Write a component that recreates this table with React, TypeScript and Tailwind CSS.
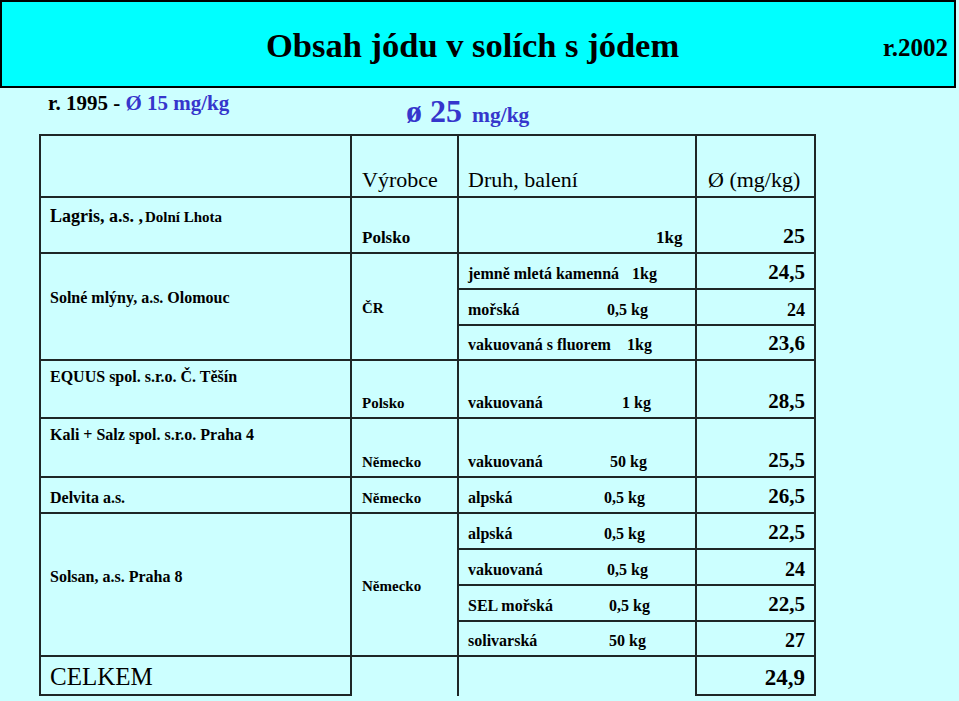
import type { ReactNode } from "react";

// light cyan slide, table of iodine content
const LINE = "border-[#1e2626]";

function Cell({ className = "", children }: { className?: string; children?: ReactNode }) {
  return <div className={`flex border-r-2 border-b-2 ${LINE} ${className}`}>{children}</div>;
}

function Druh({ name, amt, w }: { name: string; amt: string; w: string }) {
  return (
    <Cell className="items-end pl-[9px] pb-[6px] text-[16px] font-bold leading-none">
      <span className={`shrink-0 ${w}`}>{name}</span>
      <span>{amt}</span>
    </Cell>
  );
}

function Val({ v, size }: { v: string; size: string }) {
  return <Cell className={`items-end justify-end pr-[9px] pb-[5px] font-bold leading-none ${size}`}>{v}</Cell>;
}

export default function App() {
  return (
    <div className="min-h-screen w-full bg-[#ccffff] font-['Liberation_Serif','Times_New_Roman',serif] text-black">
      <div className="flex h-[88px] w-[956px] items-center border-2 border-black bg-[#00ffff]">
        <h1 className="ml-[264px] mt-[2px] text-[34.5px] font-bold leading-none">Obsah jódu v solích s jódem</h1>
        <span className="ml-auto mr-[6px] mt-[6px] text-[25px] font-bold leading-none">r.2002</span>
      </div>

      <div className="flex h-[46px]">
        <div className="w-[406px] pl-[48px] pt-[5px] text-[21px] font-bold leading-none">
          r. 1995 - <span className="text-[#3636cc]">Ø 15 mg/kg</span>
        </div>
        <div className="flex items-baseline pt-[7px] font-bold leading-none text-[#3636cc]">
          <span className="text-[32px]">ø 25</span>
          <span className="ml-[10px] text-[21.5px]">mg/kg</span>
        </div>
      </div>

      <div className="pl-[39px]">
        <div
          className={`grid grid-cols-[311px_107px_238px_119px] grid-rows-[62px_56px_36px_36px_35px_58px_59px_36px_36px_36px_36px_35px_39px] border-l-2 border-t-2 ${LINE} w-max`}
        >
          {/* header */}
          <Cell />
          <Cell className="items-end pl-[10px] pb-[5px] text-[22px] leading-none">Výrobce</Cell>
          <Cell className="items-end pl-[9px] pb-[5px] text-[22px] leading-none">Druh, balení</Cell>
          <Cell className="items-end pl-[11px] pb-[5px] text-[22px] leading-none">Ø (mg/kg)</Cell>

          {/* Lagris */}
          <Cell className="items-start pl-[9px] pt-[9px] font-bold leading-none">
            <span className="flex items-baseline">
              <span className="text-[18px]">Lagris, a.s. ,</span>
              <span className="ml-[2px] text-[15px]">Dolní Lhota</span>
            </span>
          </Cell>
          <Cell className="items-end pl-[10px] pb-[6px] text-[17px] font-bold leading-none">Polsko</Cell>
          <Cell className="items-end pl-[197px] pb-[6px] text-[17px] font-bold leading-none">1kg</Cell>
          <Val v="25" size="text-[22px]" />

          {/* Solné mlýny */}
          <Cell className="row-span-3 items-center pl-[9px] pb-[18px] text-[16px] font-bold leading-none">
            Solné mlýny, a.s. Olomouc
          </Cell>
          <Cell className="row-span-3 items-center pl-[10px] pt-[3px] text-[15px] font-bold leading-none">ČR</Cell>
          <Druh name="jemně mletá kamenná" amt="1kg" w="w-[164px]" />
          <Val v="24,5" size="text-[21px]" />
          <Druh name="mořská" amt="0,5 kg" w="w-[139px]" />
          <Val v="24" size="text-[18px]" />
          <Druh name="vakuovaná s fluorem" amt="1kg" w="w-[159px]" />
          <Val v="23,6" size="text-[21px]" />

          {/* EQUUS */}
          <Cell className="items-start pl-[9px] pt-[8px] text-[16px] font-bold leading-none">EQUUS spol. s.r.o. Č. Těšín</Cell>
          <Cell className="items-end pl-[10px] pb-[6px] text-[15px] font-bold leading-none">Polsko</Cell>
          <Druh name="vakuovaná" amt="1 kg" w="w-[154px]" />
          <Val v="28,5" size="text-[21px]" />

          {/* Kali + Salz */}
          <Cell className="items-start pl-[9px] pt-[8px] text-[16px] font-bold leading-none">Kali + Salz spol. s.r.o. Praha 4</Cell>
          <Cell className="items-end pl-[10px] pb-[6px] text-[15px] font-bold leading-none">Německo</Cell>
          <Druh name="vakuovaná" amt="50 kg" w="w-[142px]" />
          <Val v="25,5" size="text-[21px]" />

          {/* Delvita */}
          <Cell className="items-end pl-[9px] pb-[6px] text-[16px] font-bold leading-none">Delvita a.s.</Cell>
          <Cell className="items-end pl-[10px] pb-[6px] text-[15px] font-bold leading-none">Německo</Cell>
          <Druh name="alpská" amt="0,5 kg" w="w-[136px]" />
          <Val v="26,5" size="text-[21px]" />

          {/* Solsan */}
          <Cell className="row-span-4 items-center pl-[9px] pb-[16px] text-[16px] font-bold leading-none">
            Solsan, a.s. Praha 8
          </Cell>
          <Cell className="row-span-4 items-center pl-[10px] pt-[3px] text-[15px] font-bold leading-none">Německo</Cell>
          <Druh name="alpská" amt="0,5 kg" w="w-[136px]" />
          <Val v="22,5" size="text-[21px]" />
          <Druh name="vakuovaná" amt="0,5 kg" w="w-[139px]" />
          <Val v="24" size="text-[20px]" />
          <Druh name="SEL mořská" amt="0,5 kg" w="w-[141px]" />
          <Val v="22,5" size="text-[21px]" />
          <Druh name="solivarská" amt="50 kg" w="w-[141px]" />
          <Val v="27" size="text-[20px]" />

          {/* total */}
          <Cell className="items-end pl-[9px] pb-[5px] text-[25px] leading-none">CELKEM</Cell>
          <div className={`border-r-2 ${LINE}`} />
          <div className={`border-r-2 ${LINE}`} />
          <Val v="24,9" size="text-[23px]" />
        </div>
      </div>
    </div>
  );
}
